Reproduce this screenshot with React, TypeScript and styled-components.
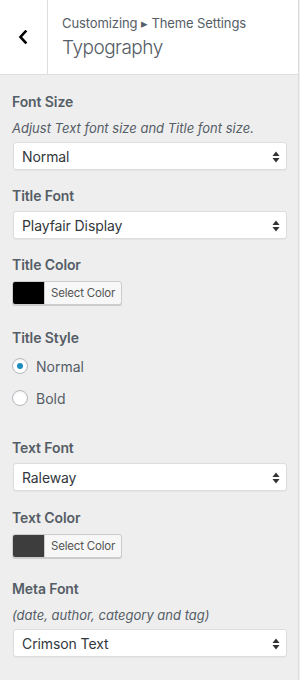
import React from "react";
import styled, { createGlobalStyle } from "styled-components";

const Global = createGlobalStyle`
  html, body { margin: 0; padding: 0; background: #eee; }
  body { font-family: Inter, "Open Sans", "Liberation Sans", sans-serif; -webkit-font-smoothing: antialiased; }
  * { box-sizing: border-box; }
`;

const Panel = styled.div`
  width: 299px;
  height: 680px;
  background: #eee;
  border-right: 1px solid #ddd;
  overflow: hidden;
`;

const Header = styled.header`
  display: flex;
  height: 75px;
  background: #fff;
  border-bottom: 1px solid #ddd;
`;

const BackButton = styled.button`
  width: 48px;
  flex: 0 0 48px;
  border: 0;
  border-right: 1px solid #ddd;
  background: #fff;
  display: flex;
  align-items: center;
  justify-content: center;
  padding: 0 2px 0 0;
  color: #000;
`;

const Titles = styled.div`
  display: flex;
  flex-direction: column;
  padding: 13px 0 0 14px;
`;

const Crumb = styled.span`
  font-size: 13px;
  line-height: 20px;
  color: #555d66;
  letter-spacing: -0.1px;
`;

const Heading = styled.h1`
  margin: 2px 0 0;
  font-size: 19px;
  line-height: 26px;
  font-weight: 300;
  color: #555d66;
  letter-spacing: -0.5px;
`;

const Body = styled.div`
  padding: 15px 12px 0 12px;
`;

const Control = styled.div<{ $gap?: number }>`
  margin-bottom: ${(p) => p.$gap ?? 12}px;
`;

const Label = styled.div<{ $mb?: number }>`
  font-size: 14px;
  line-height: 24px;
  font-weight: 600;
  color: #555d66;
  margin-bottom: ${(p) => p.$mb ?? 5}px;
  letter-spacing: -0.1px;
`;

const Desc = styled.div`
  font-size: 13px;
  line-height: 18px;
  font-style: italic;
  color: #555d66;
  margin-bottom: 5px;
`;

const SelectBox = styled.div`
  position: relative;
  margin-left: 1px;
  width: 274px;
  height: 28px;
  background: #fff;
  border: 1px solid #ddd;
  border-radius: 3px;
  box-shadow: 0 1px 1px rgba(0,0,0,0.04);
  display: flex;
  align-items: center;
  padding-left: 8px;
  font-size: 14px;
  color: #32373c;
  letter-spacing: -0.1px;
`;

const Arrows = styled.svg`
  position: absolute;
  right: 6px;
  top: 8px;
`;

const ColorButton = styled.div`
  display: inline-flex;
  height: 24px;
  border: 1px solid #ccc;
  border-radius: 3px;
  overflow: hidden;
  box-shadow: 0 1px 0 #ccc;
  background: #f7f7f7;
`;

const Swatch = styled.span<{ $c: string }>`
  width: 31px;
  background: ${(p) => p.$c};
`;

const ColorText = styled.span`
  display: flex;
  align-items: center;
  padding: 0 6px;
  font-size: 11.5px;
  letter-spacing: -0.2px;
  color: #555;
  border-left: 1px solid #ccc;
`;

const RadioRow = styled.label`
  display: flex;
  align-items: center;
  gap: 8px;
  height: 32px;
  font-size: 14px;
  color: #555d66;
`;

const RadioCircle = styled.span<{ $on?: boolean }>`
  width: 16px;
  height: 16px;
  border-radius: 50%;
  border: 1px solid #b4b9be;
  background: #fff;
  box-shadow: inset 0 1px 2px rgba(0,0,0,0.07);
  display: flex;
  align-items: center;
  justify-content: center;
  &::after {
    content: "";
    display: ${(p) => (p.$on ? "block" : "none")};
    width: 6px;
    height: 6px;
    border-radius: 50%;
    background: #1e8cbe;
  }
`;

const Select = ({ value }: { value: string }) => (
  <SelectBox>
    {value}
    <Arrows width="8" height="12" viewBox="0 0 8 12">
      <path d="M4 0.5 L7.5 5 L0.5 5 Z" fill="#333" />
      <path d="M4 11.5 L7.5 7 L0.5 7 Z" fill="#333" />
    </Arrows>
  </SelectBox>
);

const ColorPick = ({ c }: { c: string }) => (
  <ColorButton>
    <Swatch $c={c} />
    <ColorText>Select Color</ColorText>
  </ColorButton>
);

export default function App() {
  return (
    <>
      <Global />
      <Panel>
        <Header>
          <BackButton aria-label="Back">
            <svg width="10" height="14" viewBox="0 0 10 14">
              <path d="M7.5 1.5 L2.5 7 L7.5 12.5" stroke="#000" strokeWidth="2.6" fill="none" strokeLinecap="square" />
            </svg>
          </BackButton>
          <Titles>
            <Crumb>Customizing ▸ Theme Settings</Crumb>
            <Heading>Typography</Heading>
          </Titles>
        </Header>
        <Body>
          <Control $gap={14}>
            <Label>Font Size</Label>
            <Desc>Adjust Text font size and Title font size.</Desc>
            <Select value="Normal" />
          </Control>
          <Control $gap={14}>
            <Label $mb={3}>Title Font</Label>
            <Select value="Playfair Display" />
          </Control>
          <Control $gap={18}>
            <Label $mb={4}>Title Color</Label>
            <ColorPick c="#000" />
          </Control>
          <Control $gap={22}>
            <Label $mb={0}>Title Style</Label>
            <RadioRow><RadioCircle $on />Normal</RadioRow>
            <RadioRow><RadioCircle />Bold</RadioRow>
          </Control>
          <Control $gap={15}>
            <Label $mb={3}>Text Font</Label>
            <Select value="Raleway" />
          </Control>
          <Control $gap={16}>
            <Label $mb={4}>Text Color</Label>
            <ColorPick c="#3d3d3d" />
          </Control>
          <Control>
            <Label>Meta Font</Label>
            <Desc>(date, author, category and tag)</Desc>
            <Select value="Crimson Text" />
          </Control>
        </Body>
      </Panel>
    </>
  );
}
